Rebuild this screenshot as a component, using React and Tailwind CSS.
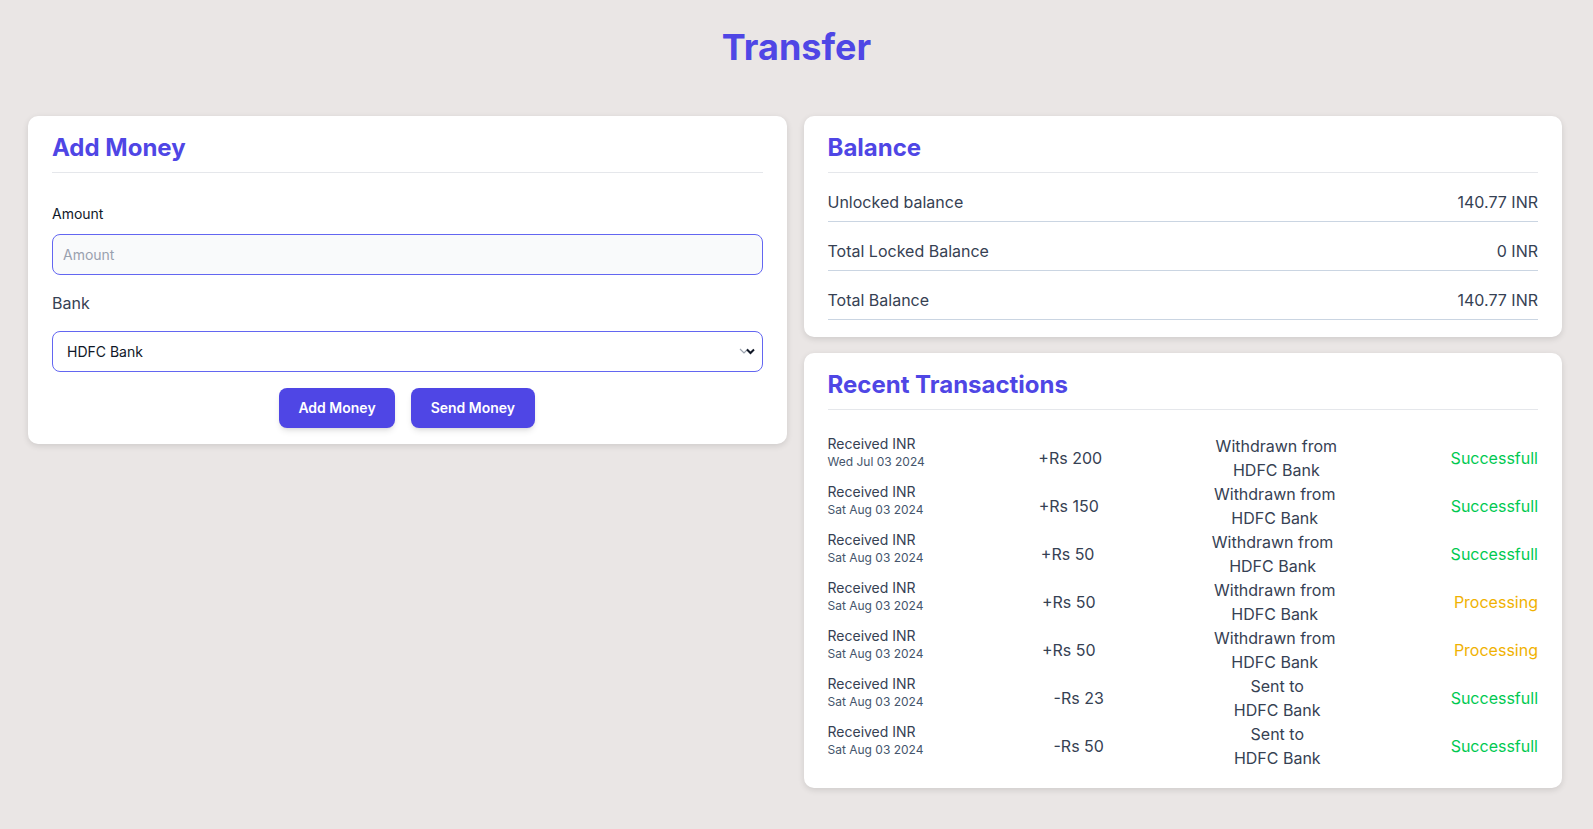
import React from "react";

function Card({ title, children, pb = "pb-4" }) {
  return (
    <div className={"rounded-[10px] bg-white px-6 pt-4 shadow-[0_2px_6px_rgba(0,0,0,0.12)] " + pb}>
      <h1 className="border-b border-gray-200 pb-2 text-2xl font-bold text-[#4f46e5]">{title}</h1>
      {children}
    </div>
  );
}

const txns = [
  { date: "Wed Jul 03 2024", amt: "+Rs 200", l1: "Withdrawn from", status: "Successfull" },
  { date: "Sat Aug 03 2024", amt: "+Rs 150", l1: "Withdrawn from", status: "Successfull" },
  { date: "Sat Aug 03 2024", amt: "+Rs 50", l1: "Withdrawn from", status: "Successfull" },
  { date: "Sat Aug 03 2024", amt: "+Rs 50", l1: "Withdrawn from", status: "Processing" },
  { date: "Sat Aug 03 2024", amt: "+Rs 50", l1: "Withdrawn from", status: "Processing" },
  { date: "Sat Aug 03 2024", amt: "-Rs 23", l1: "Sent to", status: "Successfull" },
  { date: "Sat Aug 03 2024", amt: "-Rs 50", l1: "Sent to", status: "Successfull" },
];

function BalanceRow({ label, value }) {
  return (
    <div className="flex justify-between border-b border-slate-300 pt-[17px] pb-[7px] text-base text-gray-700">
      <span>{label}</span>
      <span>{value}</span>
    </div>
  );
}

export default function App() {
  return (
    <div className="min-h-screen bg-[#eae6e5] font-['Inter',sans-serif]">
      <div className="pt-[27px] text-center text-4xl font-bold text-[#4f46e5]">Transfer</div>
      <div className="mt-[49px] grid grid-cols-2 items-start gap-[17px] pl-7 pr-[31px]">
        <Card title="Add Money">
          <div className="pt-[31px]">
            <label className="block text-sm font-normal text-gray-900">Amount</label>
            <input
              type="text"
              placeholder="Amount"
              className="mt-2.5 block h-[41px] w-full rounded-lg border border-[#6366f1] bg-gray-50 px-2.5 text-sm text-gray-900 placeholder:text-gray-400 outline-none"
            />
            <div className="mt-4 text-base text-gray-700">Bank</div>
            <div className="relative mt-4">
              <select className="block h-[41px] w-full appearance-none rounded-lg border border-[#6366f1] bg-white px-3.5 text-sm text-gray-900 outline-none">
                <option>HDFC Bank</option>
                <option>Axis Bank</option>
              </select>
              <svg className="pointer-events-none absolute right-[14px] top-[17px]" width="10" height="7" viewBox="0 0 10 7" fill="none">
                <path d="M1 1l4 4 4-4" stroke="#9ca3af" strokeWidth="1.2" />
              </svg>
              <svg className="pointer-events-none absolute right-[8px] top-[17px]" width="9" height="7" viewBox="0 0 9 7" fill="none">
                <path d="M1 1.5l3.5 3.5L8 1.5" stroke="#111827" strokeWidth="2" />
              </svg>
            </div>
            <div className="mt-4 flex justify-center gap-4">
              <button className="h-10 rounded-lg bg-[#4f46e5] px-[19px] text-sm font-semibold text-white shadow-md">Add Money</button>
              <button className="h-10 rounded-lg bg-[#4f46e5] px-5 text-sm font-semibold text-white shadow-md">Send Money</button>
            </div>
          </div>
        </Card>
        <div className="flex flex-col gap-4">
          <Card title="Balance" pb="pb-[17px]">
            <BalanceRow label="Unlocked balance" value="140.77 INR" />
            <BalanceRow label="Total Locked Balance" value="0 INR" />
            <BalanceRow label="Total Balance" value="140.77 INR" />
          </Card>
          <Card title="Recent Transactions" pb="pb-[18px]">
            <div className="pt-6">
              {txns.map((t, i) => (
                <div key={i} className="flex h-12 justify-between">
                  <div>
                    <div className="text-sm text-gray-700">Received INR</div>
                    <div className="text-xs text-slate-600">{t.date}</div>
                  </div>
                  <div className="self-center text-base text-gray-700">{t.amt}</div>
                  <div className="text-center text-base text-gray-700">
                    <div>{t.l1}</div>
                    <div>HDFC Bank</div>
                  </div>
                  <div
                    className={
                      "self-center text-base " +
                      (t.status === "Processing" ? "text-yellow-500" : "text-green-500")
                    }
                  >
                    {t.status}
                  </div>
                </div>
              ))}
            </div>
          </Card>
        </div>
      </div>
    </div>
  );
}
